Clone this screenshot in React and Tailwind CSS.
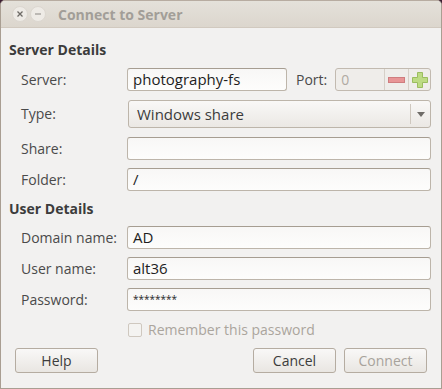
import React from "react";

const font = { fontFamily: '"Open Sans", "DejaVu Sans", sans-serif' };

function Field({ value, className = "" }) {
  return (
    <div
      className={
        "h-[23px] flex items-center px-[5px] rounded-[3px] border border-[#bdb5aa] border-t-[#a69d91] bg-gradient-to-b from-[#f8f7f6] to-[#fdfdfc] text-[15px] text-[#1e1e1e] " +
        className
      }
    >
      {value}
    </div>
  );
}

function Row({ label, children, top }) {
  return (
    <div className="flex items-center" style={{ marginTop: top }}>
      <div className="w-[126px] pl-[20px] text-[14px] leading-[20px] whitespace-nowrap text-[#4a4a4a] shrink-0">{label}</div>
      {children}
    </div>
  );
}

function Btn({ children, disabled, className = "" }) {
  return (
    <div
      className={
        "h-[25px] w-[83px] flex items-center justify-center rounded-[3px] border border-[#b5aca1] bg-gradient-to-b from-[#f9f8f7] to-[#e9e6e2] text-[14px] " +
        (disabled ? "text-[#a8a39c] " : "text-[#3c3c3c] ") +
        className
      }
    >
      {children}
    </div>
  );
}

export default function App() {
  return (
    <div className="w-[442px] h-[389px] bg-[#3c1f33]" style={font}>
      <div className="w-full h-full flex flex-col rounded-t-[5px] border border-[#a99e92] border-t-[#b7aca1] bg-[#f2f1f0] overflow-hidden">
        {/* title bar */}
        <div className="h-[27px] shrink-0 flex items-center bg-gradient-to-b from-[#e4e1da] to-[#dcd6cd] border-b border-[#d1c9bf]">
          <div className="ml-[11px] w-[16px] h-[16px] rounded-full bg-[#eeebe6] border border-[#dcd7d0] flex items-center justify-center">
            <svg width="8" height="8" viewBox="0 0 8 8">
              <path d="M1.5 1.5 L6.5 6.5 M6.5 1.5 L1.5 6.5" stroke="#6d6a66" strokeWidth="1.3" />
            </svg>
          </div>
          <div className="ml-[2px] w-[16px] h-[16px] rounded-full bg-[#eeebe6] border border-[#dcd7d0] flex items-center justify-center">
            <svg width="8" height="8" viewBox="0 0 8 8">
              <path d="M1 4 L7 4" stroke="#8a8781" strokeWidth="1.2" />
            </svg>
          </div>
          <div className="ml-[12px] text-[14px] font-bold text-[#a29e98]">Connect to Server</div>
        </div>

        {/* body */}
        <div className="flex-1 flex flex-col">
          <div className="mt-[12px] pl-[8px] text-[14px] font-bold text-[#3c3c3c] leading-[20px]">Server Details</div>

          <Row label="Server:" top={8}>
            <Field value="photography-fs" className="w-[160px]" />
            <div className="ml-[9px] text-[14px] text-[#4a4a4a]">Port:</div>
            <div className="ml-[8px] h-[23px] w-[96px] flex rounded-[3px] border border-[#c2bab0] bg-[#efedea] overflow-hidden">
              <div className="flex-1 flex items-center px-[5px] text-[14px] text-[#b0aaa2]">0</div>
              <div className="w-[24px] border-l border-[#d6d0c8] flex items-center justify-center">
                <div className="w-[17px] h-[6px] bg-[#e89596] border border-[#cf7d7f]" />
              </div>
              <div className="w-[22px] border-l border-[#d6d0c8] flex items-center justify-center">
                <svg width="16" height="16" viewBox="0 0 16 16">
                  <path d="M5.5 0.5 H10.5 V5.5 H15.5 V10.5 H10.5 V15.5 H5.5 V10.5 H0.5 V5.5 H5.5 Z" fill="#bddb84" stroke="#9bbd5f" />
                </svg>
              </div>
            </div>
          </Row>

          <Row label="Type:" top={9}>
            <div className="h-[28px] w-[303px] ml-[1px] flex items-center rounded-[3px] border border-[#bdb5aa] bg-gradient-to-b from-[#f9f8f7] to-[#ebe8e4]">
              <div className="flex-1 pl-[8px] text-[15px] text-[#3c3c3c]">Windows share</div>
              <div className="w-px h-[20px] bg-[#cfc8bf]" />
              <div className="w-[19px] flex items-center justify-center">
                <svg width="8" height="5" viewBox="0 0 8 5">
                  <path d="M0 0 H8 L4 5 Z" fill="#6f6c68" />
                </svg>
              </div>
            </div>
          </Row>

          <Row label="Share:" top={9}>
            <Field value="" className="w-[304px]" />
          </Row>
          <Row label="Folder:" top={8}>
            <Field value="/" className="w-[304px]" />
          </Row>

          <div className="mt-[8px] pl-[8px] text-[14px] font-bold text-[#3c3c3c] leading-[20px]">User Details</div>

          <Row label="Domain name:" top={7}>
            <Field value="AD" className="w-[304px]" />
          </Row>
          <Row label="User name:" top={8}>
            <Field value="alt36" className="w-[304px]" />
          </Row>
          <Row label="Password:" top={8}>
            <Field value={<span className="text-[10px] tracking-[0px]">********</span>} className="w-[304px]" />
          </Row>

          <div className="flex items-center mt-[9px] pl-[127px]">
            <div className="w-[14px] h-[14px] rounded-[2px] border border-[#cfc8bf] bg-[#f4f3f1]" />
            <div className="ml-[6px] text-[14px] leading-[20px] text-[#aba59d]">Remember this password</div>
          </div>

          <div className="flex items-center mt-[8px] px-[14px]">
            <Btn>Help</Btn>
            <div className="flex-1" />
            <Btn>Cancel</Btn>
            <Btn disabled className="ml-[8px]">Connect</Btn>
          </div>
        </div>
      </div>
    </div>
  );
}
